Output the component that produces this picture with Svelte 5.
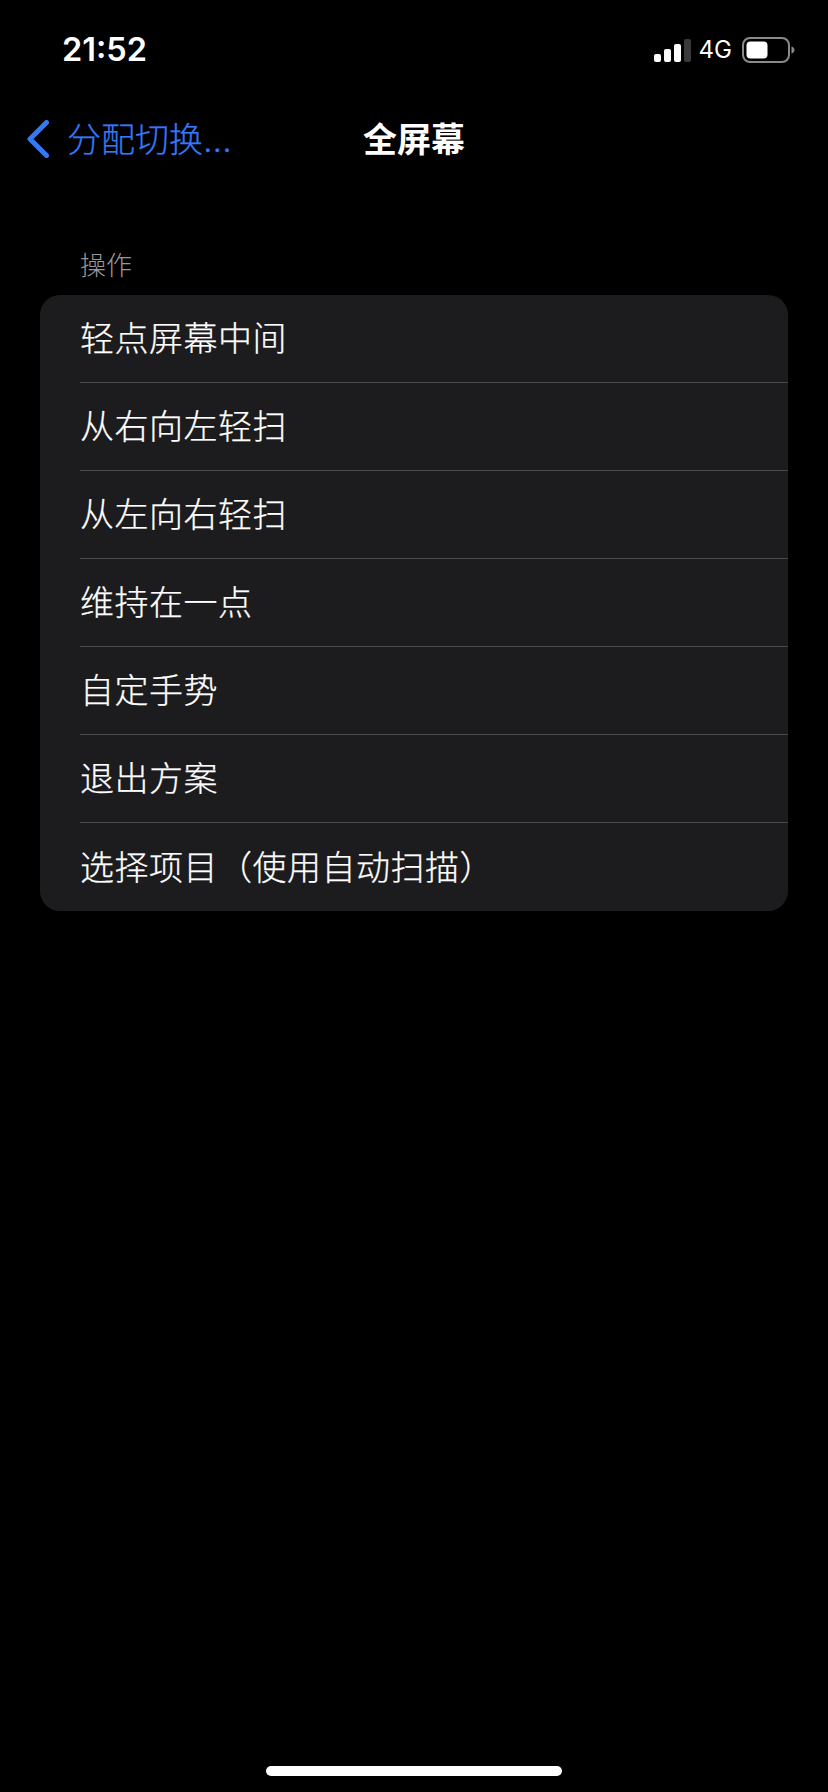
<script>
	const actions = [
		'轻点屏幕中间',
		'从右向左轻扫',
		'从左向右轻扫',
		'维持在一点',
		'自定手势',
		'退出方案',
		'选择项目（使用自动扫描）'
	];
	const bars = [8, 13, 18, 23];
</script>

<div class="screen">
	<div class="status">
		<span class="time">21:52</span>
		<div class="status-right">
			<div class="signal">
				{#each bars as h, i}
					<span class="bar" class:off={i === 3} style="height: {h}px"></span>
				{/each}
			</div>
			<span class="net">4G</span>
			<svg class="battery" width="53" height="26" viewBox="0 0 53 26">
				<rect x="1" y="1" width="46" height="24" rx="7" fill="none" stroke="#8a8a8a" stroke-width="2" />
				<rect x="4.500" y="4.500" width="21" height="17" rx="4" fill="#fff" />
				<path d="M49.500 9.500c2 .6 3 2 3 3.500s-1 2.900-3 3.500z" fill="#8a8a8a" />
			</svg>
		</div>
	</div>

	<nav class="nav">
		<div class="back">
			<svg width="24" height="38" viewBox="0 0 24 38">
				<path d="M20.500 2.500 4 19l16.500 16.500" fill="none" stroke="#3478f6" stroke-width="5" stroke-linecap="round" stroke-linejoin="round" />
			</svg>
			<span>分配切换...</span>
		</div>
		<div class="title">全屏幕</div>
		<div></div>
	</nav>

	<div class="section-label">操作</div>
	<ul class="list">
		{#each actions as action}
			<li><span class="row">{action}</span></li>
		{/each}
	</ul>

	<div class="home"></div>
</div>

<style>
	:global(body) {
		background: #000;
	}

	.screen {
		position: relative;
		height: 1792px;
		background: #000;
		color: #fff;
		font-family: Inter, "Noto Sans CJK SC", sans-serif;
		overflow: hidden;
	}

	/* Status bar */
	.status {
		display: flex;
		align-items: center;
		justify-content: space-between;
		height: 50px;
		padding: 25px 33px 0 62px;
	}

	.time {
		font-size: 32.500px;
		font-weight: 600;
		line-height: 1;
	}

	.status-right {
		display: flex;
		align-items: center;
	}

	.signal {
		display: flex;
		align-items: flex-end;
		gap: 3px;
		height: 23px;
		margin-right: 8px;
	}

	.bar {
		width: 7px;
		border-radius: 2px;
		background: #fff;
	}

	.bar.off {
		background: #3a3a3a;
	}

	.net {
		font-size: 24px;
		line-height: 1;
		margin-right: 10px;
	}

	.battery {
		display: block;
	}

	/* Navigation */
	.nav {
		display: grid;
		grid-template-columns: 1fr auto 1fr;
		align-items: center;
		height: 44px;
		margin-top: 38px;
	}

	.back {
		display: flex;
		align-items: center;
		gap: 17px;
		padding-left: 26px;
		color: #3478f6;
		font-size: 34px;
		font-weight: 300;
		-webkit-text-stroke: 0.250px #3478f6;
		white-space: nowrap;
	}

	.back svg {
		margin-top: 2px;
	}

	.title {
		font-size: 34px;
		font-weight: 700;
	}

	/* Section */
	.section-label {
		margin-top: 92px;
		padding-left: 80px;
		color: #98989d;
		font-size: 26px;
		font-weight: 300;
		line-height: 34px;
	}

	.list {
		margin: 12px 40px 0;
		padding: 0;
		list-style: none;
		background: #1c1c1e;
		border-radius: 20px;
		overflow: hidden;
	}

	.list li {
		padding-left: 40px;
	}

	.row {
		display: flex;
		align-items: center;
		box-sizing: border-box;
		height: 88px;
		padding-bottom: 4px;
		font-size: 34px;
		font-weight: 300;
		letter-spacing: 0.500px;
		-webkit-text-stroke: 0.250px #fff;
		border-bottom: 1px solid #48484a;
	}

	.list li:last-child .row {
		border-bottom: none;
	}

	/* Home indicator lies over the page */
	.home {
		position: absolute;
		left: 266px;
		bottom: 16px;
		width: 296px;
		height: 10px;
		border-radius: 5px;
		background: #fff;
	}
</style>
